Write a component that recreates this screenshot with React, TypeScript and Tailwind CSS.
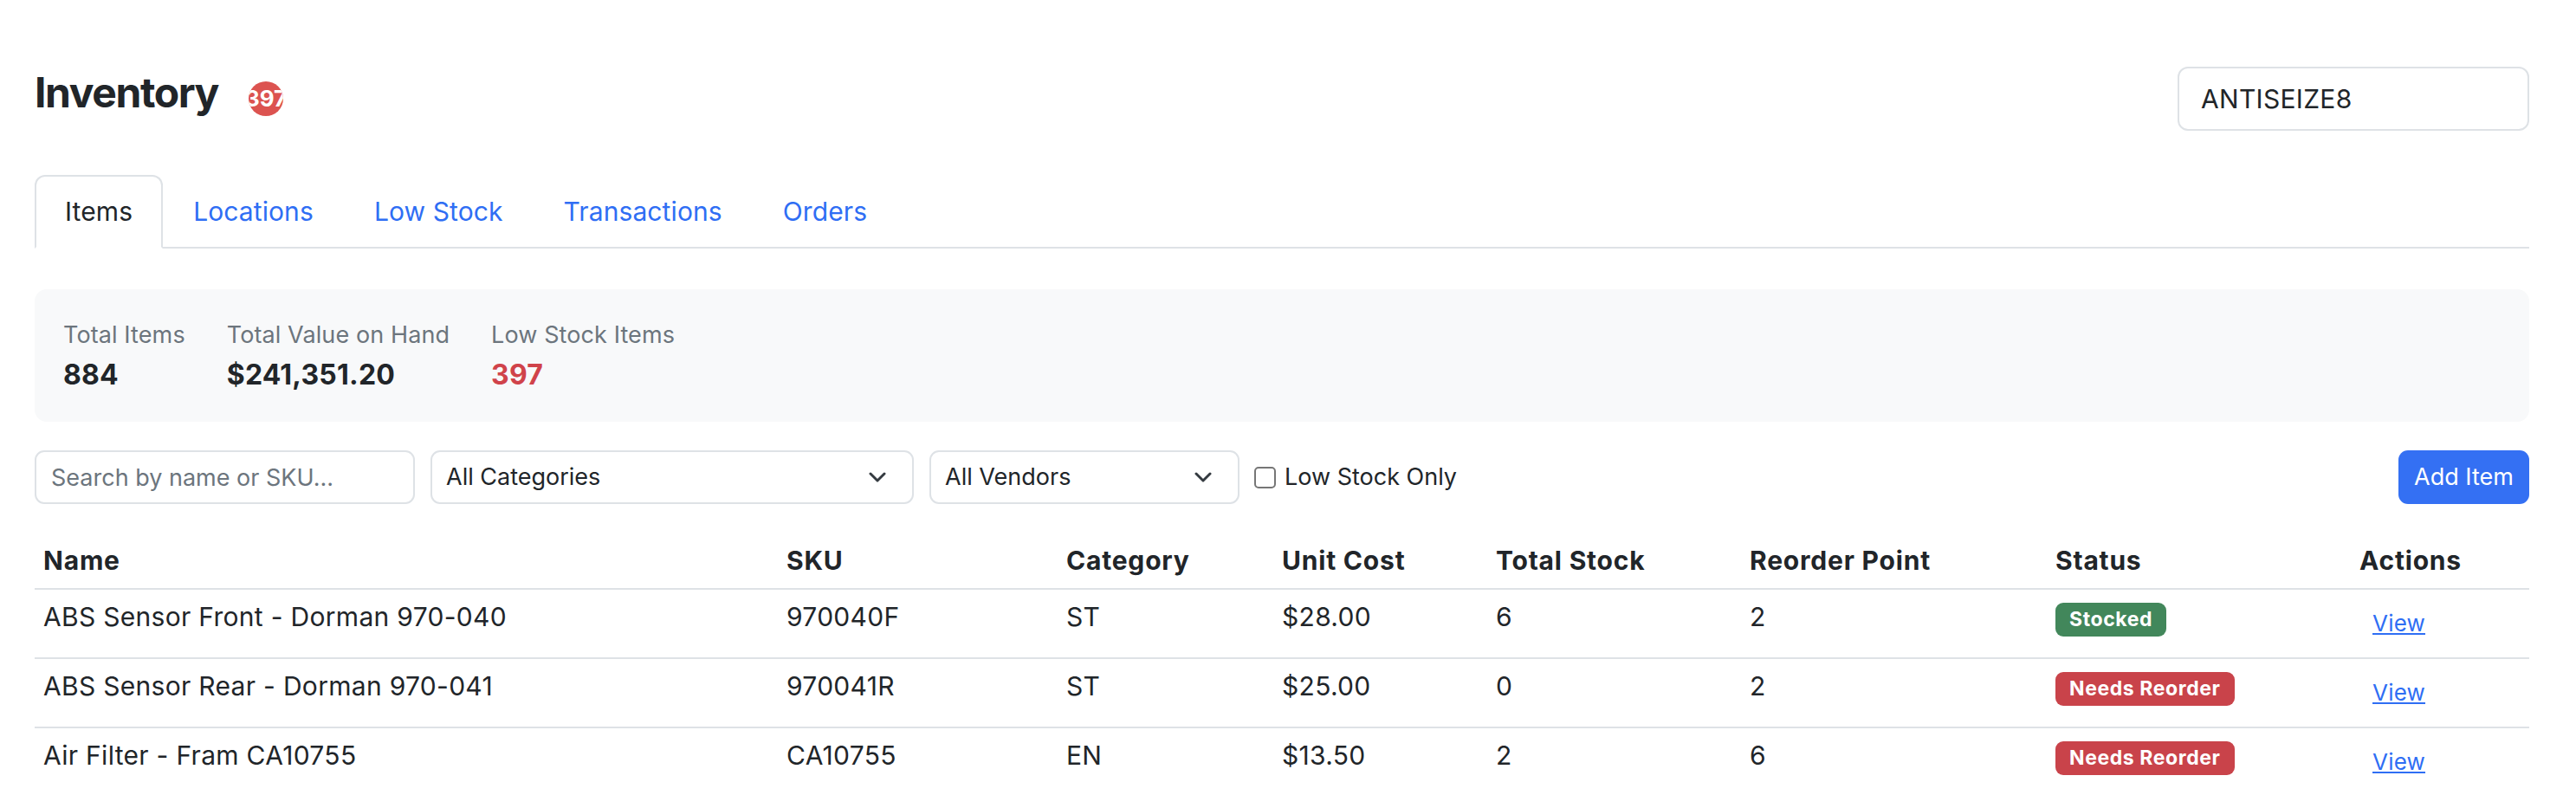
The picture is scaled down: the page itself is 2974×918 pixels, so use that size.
import { useState } from 'react'

type Item = {
  name: string
  sku: string
  category: string
  cost: string
  stock: number
  reorder: number
  status: 'Stocked' | 'Needs Reorder'
}

const ITEMS: Item[] = [
  { name: 'ABS Sensor Front - Dorman 970-040', sku: '970040F', category: 'ST', cost: '$28.00', stock: 6, reorder: 2, status: 'Stocked' },
  { name: 'ABS Sensor Rear - Dorman 970-041', sku: '970041R', category: 'ST', cost: '$25.00', stock: 0, reorder: 2, status: 'Needs Reorder' },
  { name: 'Air Filter - Fram CA10755', sku: 'CA10755', category: 'EN', cost: '$13.50', stock: 2, reorder: 6, status: 'Needs Reorder' },
]

const TABS = ['Items', 'Locations', 'Low Stock', 'Transactions', 'Orders']
const COLS = 'grid grid-cols-[858px_323px_249px_247px_293px_353px_351px_206px]'

function Chevron() {
  return (
    <svg width="20" height="12" viewBox="0 0 20 12" fill="none" className="shrink-0">
      <path d="M2 2 L10 10 L18 2" stroke="#343a40" strokeWidth="3" strokeLinecap="round" strokeLinejoin="round" />
    </svg>
  )
}

export default function App() {
  const [tab, setTab] = useState('Items')
  const [lowOnly, setLowOnly] = useState(false)

  return (
    <div className="min-h-screen bg-white text-[#212529] font-['Inter',sans-serif]">
      <div className="ml-[40px] w-[2880px] pt-[77px]">
        <div className="flex items-start justify-between">
          <div className="flex items-start">
            <h1 className="mt-[1px] text-[48px] leading-[58px] font-bold tracking-[-1.4px]">Inventory</h1>
            <span className="ml-[35px] mt-[17px] size-[40px] rounded-full bg-[#dc5350] flex items-center justify-center overflow-hidden text-white text-[26px] font-bold leading-none">
              397
            </span>
          </div>
          <input
            readOnly
            value="ANTISEIZE8"
            className="w-[406px] h-[74px] border-2 border-[#dee2e6] rounded-[12px] px-[25px] text-[30px] tracking-[0.3px] text-[#212529] outline-none"
          />
        </div>

        <div className="mt-[51px] flex border-b-2 border-[#dee2e6]">
          {TABS.map((t) => (
            <button
              key={t}
              onClick={() => setTab(t)}
              className={`-mb-[2px] h-[85px] px-[33px] flex items-center text-[30px] tracking-[0.1px] border-2 rounded-t-[12px] ${
                tab === t ? 'border-[#dee2e6] border-b-white bg-white text-[#212529]' : 'border-transparent text-[#2f6ef4]'
              }`}
            >
              {t}
            </button>
          ))}
        </div>

        <div className="mt-[47px] h-[153px] rounded-[14px] bg-[#f8f9fa] pl-[33px] pt-[33px] flex gap-[48px]">
          <div>
            <div className="text-[27px] leading-[39px] tracking-[0.1px] text-[#6c757d]">Total Items</div>
            <div className="mt-[4px] text-[32px] leading-[46px] font-bold tracking-[0.2px]">884</div>
          </div>
          <div>
            <div className="text-[27px] leading-[39px] tracking-[0.1px] text-[#6c757d]">Total Value on Hand</div>
            <div className="mt-[4px] text-[32px] leading-[46px] font-bold tracking-[0.2px]">$241,351.20</div>
          </div>
          <div>
            <div className="text-[27px] leading-[39px] tracking-[0.1px] text-[#6c757d]">Low Stock Items</div>
            <div className="mt-[4px] text-[32px] leading-[46px] font-bold tracking-[0.2px] text-[#d0434a]">397</div>
          </div>
        </div>

        <div className="mt-[33px] h-[62px] flex items-center">
          <input
            placeholder="Search by name or SKU..."
            className="w-[439px] h-[62px] border-2 border-[#dee2e6] rounded-[11px] px-[17px] text-[27px] placeholder:text-[#6c757d] outline-none"
          />
          <div className="ml-[18px] w-[558px] h-[62px] border-2 border-[#dee2e6] rounded-[11px] pl-[16px] pr-[30px] flex items-center justify-between text-[27px]">
            <span>All Categories</span>
            <Chevron />
          </div>
          <div className="ml-[18px] w-[358px] h-[62px] border-2 border-[#dee2e6] rounded-[11px] pl-[16px] pr-[30px] flex items-center justify-between text-[27px]">
            <span>All Vendors</span>
            <Chevron />
          </div>
          <label className="ml-[17px] flex items-center text-[27px] cursor-pointer">
            <span
              onClick={() => setLowOnly(!lowOnly)}
              className={`size-[25px] rounded-[5px] border-2 border-[#767676] ${lowOnly ? 'bg-[#3470f3]' : 'bg-white'}`}
            />
            <span className="ml-[10px]">Low Stock Only</span>
          </label>
          <button className="ml-auto w-[151px] h-[62px] rounded-[11px] bg-[#3470f3] text-white text-[27px]">Add Item</button>
        </div>

        <div className="mt-[34px]">
          <div className={`${COLS} border-b-2 border-[#dee2e6] text-[30px] leading-[45px] font-bold tracking-[0.8px]`}>
            {['Name', 'SKU', 'Category', 'Unit Cost', 'Total Stock', 'Reorder Point', 'Status', 'Actions'].map((h) => (
              <div key={h} className="px-[10px] py-[9px]">{h}</div>
            ))}
          </div>
          {ITEMS.map((it) => (
            <div key={it.sku} className={`${COLS} h-[80px] border-b-2 border-[#dee2e6] text-[30px] leading-[45px] tracking-[0.3px]`}>
              <div className="px-[10px] pt-[9px]">{it.name}</div>
              <div className="px-[10px] pt-[9px]">{it.sku}</div>
              <div className="px-[10px] pt-[9px]">{it.category}</div>
              <div className="px-[10px] pt-[9px]">{it.cost}</div>
              <div className="px-[10px] pt-[9px]">{it.stock}</div>
              <div className="px-[10px] pt-[9px]">{it.reorder}</div>
              <div className="px-[10px] pt-[15px] flex items-start">
                <span
                  className={`rounded-[9px] px-[16px] py-[8px] text-[23px] leading-[23px] font-bold tracking-[0.6px] text-white ${
                    it.status === 'Stocked' ? 'bg-[#42875b]' : 'bg-[#c9434a]'
                  }`}
                >
                  {it.status}
                </span>
              </div>
              <div className="px-[10px] pt-[19px] flex items-start">
                <a href="#" className="ml-[15px] text-[26px] leading-[39px] tracking-[0.2px] text-[#2f6ef4] underline">View</a>
              </div>
            </div>
          ))}
        </div>
      </div>
    </div>
  )
}
